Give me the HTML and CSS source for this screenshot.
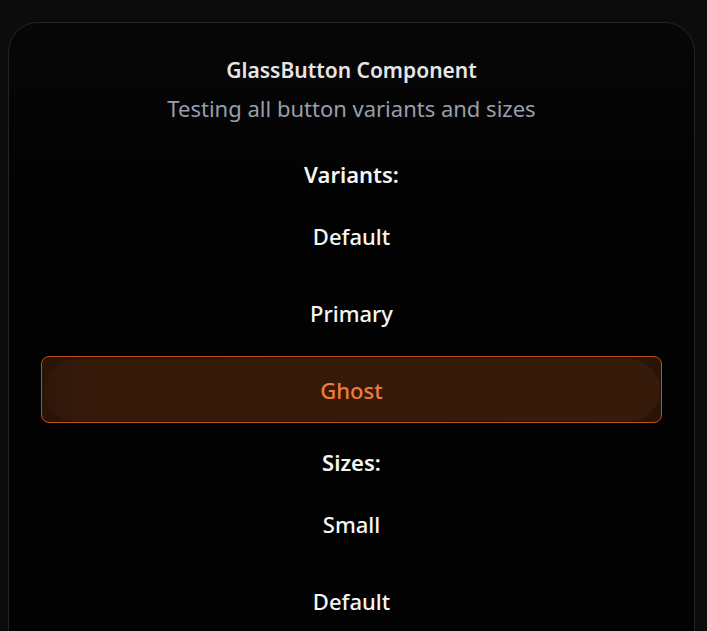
FILE: index.html
```html
<!DOCTYPE html>
<html lang="en">
<head>
<meta charset="utf-8">
<title>GlassButton Component</title>
<link rel="stylesheet" href="styles.css">
</head>
<body>
<div class="page">
  <section class="card">
    <h1 class="title">GlassButton Component</h1>
    <p class="subtitle">Testing all button variants and sizes</p>
    <div class="group">
      <h2 class="label">Variants:</h2>
      <button class="btn">Default</button>
      <button class="btn">Primary</button>
      <button class="btn btn-ghost"><span class="pill"></span><span class="btn-text">Ghost</span></button>
      <h2 class="label label-sizes">Sizes:</h2>
      <button class="btn">Small</button>
      <button class="btn">Default</button>
      <button class="btn">Large</button>
    </div>
  </section>
</div>
</body>
</html>
```

FILE: styles.css
```css
* { box-sizing: border-box; }
html, body {
  margin: 0;
  padding: 0;
  background: #0c0c0c;
  font-family: "Noto Sans", "Open Sans", sans-serif;
  overflow: hidden;
}
.page {
  padding: 22px 12px 0 8px;
}
.card {
  border: 1px solid #242424;
  border-radius: 30px;
  background: linear-gradient(180deg, #070707 0%, #020202 25%, #020202 100%);
  padding: 32px 32px 40px;
  text-align: center;
}
.title {
  margin: 0;
  font-size: 21px;
  line-height: 30px;
  font-weight: 600;
  color: #e6e6e6;
}
.subtitle {
  margin: 7px 0 0;
  font-size: 22px;
  line-height: 32px;
  color: #989eab;
}
.group {
  display: flex;
  flex-direction: column;
  gap: 10px;
  margin-top: 34px;
}
.label {
  margin: 0 0 2px;
  font-size: 22px;
  line-height: 32px;
  font-weight: 600;
  color: #f5f5f5;
}
.label-sizes {
  margin-top: 13px;
}
.btn {
  position: relative;
  display: flex;
  align-items: center;
  justify-content: center;
  flex: none;
  height: 67px;
  width: 100%;
  border: 1px solid #050505;
  border-radius: 8px;
  background: #020202;
  color: #f5f5f5;
  font-family: inherit;
  font-size: 22px;
  font-weight: 500;
  cursor: pointer;
}
.btn-ghost {
  border-color: #b8521a;
  background: #2a1408;
  color: #f07a3a;
  overflow: hidden;
}
.pill {
  position: absolute;
  inset: 2px 1px 1px 2px;
  border-radius: 9999px;
  background: linear-gradient(90deg, #2e1609 0%, #351a0a 6%, #361a0a 100%);
}
.btn-text {
  position: relative;
}
```
